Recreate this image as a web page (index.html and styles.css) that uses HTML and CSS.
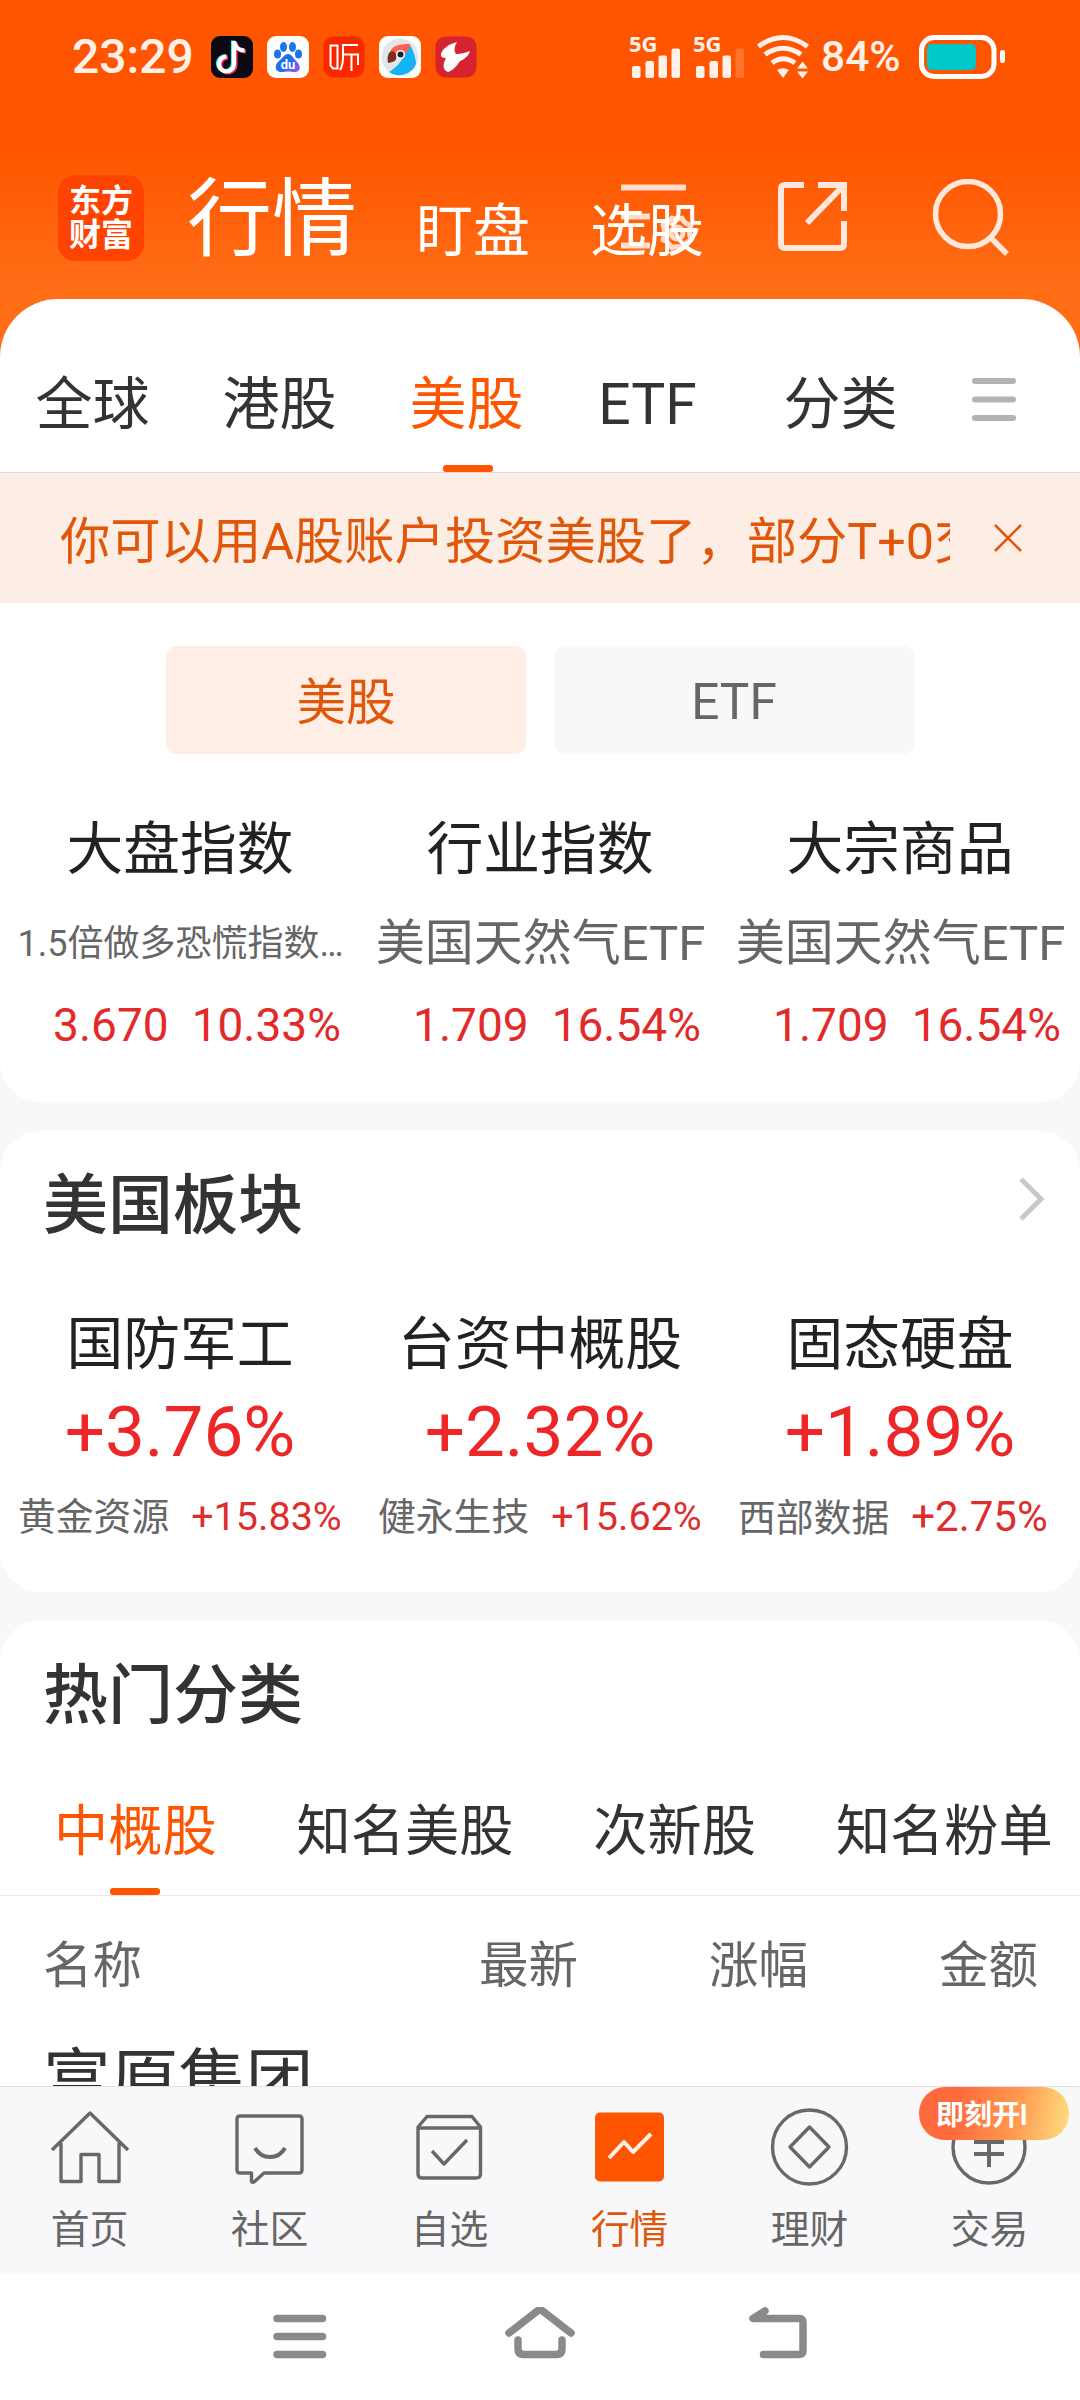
FILE: index.html
```html
<!DOCTYPE html>
<html lang="zh-CN">
<head>
<meta charset="utf-8">
<title>行情</title>
<link rel="stylesheet" href="styles.css">
</head>
<body>
<div class="screen">
  <header class="top">
    <div class="status">
      <span class="clock">23:29</span>
      <div class="apps">
        <svg class="app" viewBox="0 0 42 42"><rect width="42" height="42" rx="9" fill="#0b0a14"/><g fill="none" stroke-width="4.2"><path d="M23 5V28a7.500 7.500 0 1 1-7.500-7.500M23 6c1 5 5 8.500 10.500 8.500" stroke="#25f4ee" transform="translate(-1 -.5)"/><path d="M23 5V28a7.500 7.500 0 1 1-7.500-7.500M23 6c1 5 5 8.500 10.500 8.500" stroke="#fe2c55" transform="translate(1.500 1)"/><path d="M23 5V28a7.500 7.500 0 1 1-7.500-7.500M23 6c1 5 5 8.500 10.500 8.500" stroke="#fff"/></g></svg>
        <svg class="app" viewBox="0 0 42 42"><defs><linearGradient id="paw" x1="0" y1="0" x2="1" y2="1"><stop offset=".5" stop-color="#1f6ff0"/><stop offset="1" stop-color="#b04cf0"/></linearGradient></defs><rect width="42" height="42" rx="9" fill="#fff"/><g fill="#1b74ea"><ellipse cx="16.500" cy="11" rx="3.500" ry="5"/><ellipse cx="25.500" cy="11" rx="3.500" ry="5"/><ellipse cx="10.500" cy="18" rx="3.500" ry="4.500"/><ellipse cx="31.500" cy="18" rx="3.500" ry="4.500"/></g><path d="M21 18c4 0 5 4 8 7 4 3 6 10 0 11-3 .5-5-.5-8-.5s-5 1-8 .5c-6-1-5-8-1-11 4-3 5-7 9-7z" fill="url(#paw)"/><text x="21" y="33" text-anchor="middle" class="du">du</text></svg>
        <svg class="app" viewBox="0 0 42 42"><rect x=".5" y=".5" width="41" height="41" rx="10" fill="#fa2800"/><path d="M7.500 9.500h7v23H10l-2.500-3zM35 9H20v12q0 8-3 13M20 18.500h15V29M28.500 18.500V35" fill="none" stroke="#fff" stroke-width="2"/></svg>
        <svg class="app" viewBox="0 0 42 42"><rect width="42" height="42" rx="9" fill="#fff"/><circle cx="21" cy="21" r="18.500" fill="#e2e5ea"/><path d="M31 9c4 7 6 14 6 19a18 18 0 0 1-27 8c6-4 12-9 16-18z" fill="#14b4f2"/><path d="M11 17C12 10 19 8 31 8c0 5-3 9-8 11l-7 2z" fill="#fb6350"/><path d="M9 27c-1-6 0-11 4-12 4 1 5 5 4 8-1 3-4 3-8 4z" fill="#7e2c20"/><circle cx="21.500" cy="18.500" r="4.500" fill="#fff"/><circle cx="21.500" cy="18.500" r="3" fill="#17202c"/></svg>
        <svg class="app" viewBox="0 0 42 42"><rect x=".5" y=".5" width="41" height="41" rx="10" fill="#d5232f"/><path d="M22 6c-8 2-15 7-16 12-.500 3 2 4 5 4-3 5-4 12 2 14 4-1 9-6 12-11 5-2 9-6 10-10-5 2-9 3-14 3-2-3-2-7 1-12z" fill="#fff"/></svg>
      </div>
      <svg class="signals" viewBox="0 0 184 46" fill="#fff0e8">
        <text x="0" y="18" class="net">5G</text><text x="64" y="18" class="net">5G</text>
        <rect x="3" y="32" width="8.500" height="12" rx="2"/><rect x="16.500" y="27" width="8.500" height="17" rx="2"/><rect x="29.500" y="21.500" width="8.500" height="22.500" rx="2"/><rect x="42.500" y="14.500" width="8.500" height="29.500" rx="2"/>
        <rect x="67" y="32" width="8.500" height="12" rx="2"/><rect x="80.500" y="27" width="8.500" height="17" rx="2"/><rect x="93.500" y="21.500" width="8.500" height="22.500" rx="2"/><rect x="106.500" y="14.500" width="8.500" height="29.500" rx="2" opacity=".2"/>
        <g fill="none" stroke="#fff0e8" stroke-width="5"><path d="M129.500 12.500Q154 -5.500 178.500 12.500"/><path d="M136 20.500Q154 8 172 20.500"/><path d="M143 29Q154 20.500 166 29"/></g>
        <path d="M148 36q6-3.500 12 0l-6 8zM168 34.500l5.500-7 5.500 7zM168 37.500h11l-5.500 7z"/>
      </svg>
      <span class="percent">84%</span>
      <svg class="battery" viewBox="0 0 86 44"><rect x="2.500" y="2.500" width="72.500" height="39" rx="12.500" fill="none" stroke="#fff" stroke-width="5"/><rect x="8" y="9" width="49" height="26" rx="5" fill="#00c8c8"/><rect x="81" y="15" width="5" height="13" rx="2" fill="#fff"/></svg>
    </div>
    <div class="titlebar">
      <div class="logo"><span>东方</span><span>财富</span></div>
      <h1>行情</h1>
      <span class="sub watch">盯盘</span>
      <span class="sub pick">选股<svg class="filter" viewBox="0 0 80 70" fill="none" stroke="#ffdccb" stroke-width="6"><path d="M1 4.500h65M1 33.500h29M1 62.500h29"/><path d="M52 35Q57 37 62 35Q64 41 71 42Q68 49 71 57Q65 59 62 65Q57 62 52 65Q49 59 43 57Q46 49 43 42Q49 41 52 35z" stroke-width="5" stroke-linejoin="round"/><circle cx="57" cy="50" r="6" stroke-width="5"/></svg></span>
      <svg class="share" viewBox="0 0 72 72" fill="none" stroke="#ffe8db" stroke-width="6"><path d="M27 4H8Q4 4 4 8V63Q4 67 8 67H63Q67 67 67 63V40M41 4H67V30M67 4L30 42"/></svg>
      <svg class="search" viewBox="0 0 78 78" fill="none" stroke="#ffe8db" stroke-width="5.500"><circle cx="36" cy="35" r="32.500"/><path d="M58 58L75 75"/></svg>
    </div>
  </header>

  <main>
    <section class="sheet">
      <nav class="tabs"><span>全球</span><span>港股</span><span class="on">美股</span><span class="latin">ETF</span><span>分类</span>
        <svg class="menu" viewBox="0 0 44 44" stroke="#b3b3b3" stroke-width="6" stroke-linecap="round"><path d="M3 4h38M3 22.500h38M3 41h38"/></svg></nav>
      <div class="notice"><p>你可以用A股账户投资美股了，部分T+0交易</p>
        <svg class="close" viewBox="0 0 28 28" stroke="#e2560a" stroke-width="2.500"><path d="M1 1L27 27M27 1L1 27"/></svg></div>
      <div class="pills"><span class="pill on">美股</span><span class="pill">ETF</span></div>
      <div class="grid">
        <div class="index"><h3>大盘指数</h3><p class="small">1.5倍做多恐慌指数…</p><div class="quote"><b>3.670</b><b>10.33%</b></div></div>
        <div class="index"><h3>行业指数</h3><p>美国天然气ETF</p><div class="quote"><b>1.709</b><b>16.54%</b></div></div>
        <div class="index"><h3>大宗商品</h3><p>美国天然气ETF</p><div class="quote"><b>1.709</b><b>16.54%</b></div></div>
      </div>
    </section>

    <section class="card sectors">
      <div class="head"><h2>美国板块</h2><svg class="chevron" viewBox="0 0 28 44" fill="none" stroke="#c9c9c9" stroke-width="5"><path d="M3 2L23 22L3 42"/></svg></div>
      <div class="grid">
        <div class="sector"><h3>国防军工</h3><strong>+3.76%</strong><div class="lead"><span>黄金资源</span><b>+15.83%</b></div></div>
        <div class="sector"><h3>台资中概股</h3><strong>+2.32%</strong><div class="lead"><span>健永生技</span><b>+15.62%</b></div></div>
        <div class="sector"><h3>固态硬盘</h3><strong>+1.89%</strong><div class="lead"><span>西部数据</span><b class="wide">+2.75%</b></div></div>
      </div>
    </section>

    <section class="card hot">
      <div class="head"><h2>热门分类</h2></div>
      <nav class="cats"><span class="on">中概股</span><span>知名美股</span><span>次新股</span><span>知名粉单</span></nav>
      <div class="cols"><span>名称</span><span>最新</span><span>涨幅</span><span>金额</span></div>
      <div class="stock">富原集团</div>
    </section>
  </main>

  <footer class="dock">
    <div class="item"><svg viewBox="0 0 80 80"><path d="M2 43L40 6L78 43M11 36V74.500H31V47.500H49V74.500H69V36"/></svg><span>首页</span></div>
    <div class="item"><svg viewBox="0 0 80 80"><path d="M10 9H69Q72 9 72 12V63Q72 66 69 66H34L24 75Q21 76 21.500 73V66H10Q7 66 7 63V12Q7 9 10 9z"/><path d="M25 41Q30 50 40 50T55 41" stroke-width="4"/></svg><span>社区</span></div>
    <div class="item"><svg viewBox="0 0 80 80"><path d="M8 20V67Q8 71 12 71H66Q70.500 71 70.500 67V20L62 9.500H17zM8 21H70.500M22 44L34 57L57 33"/></svg><span>自选</span></div>
    <div class="item on"><svg viewBox="0 0 80 80"><rect x="5" y="5.500" width="69" height="69" rx="5"/><path d="M19 51L34 35L43 45L61 27"/></svg><span>行情</span></div>
    <div class="item"><svg viewBox="0 0 80 80"><circle cx="39.500" cy="40" r="37"/><path d="M39.500 20L59 40L39.500 60L20 40z"/></svg><span>理财</span></div>
    <div class="item"><svg viewBox="0 0 80 80"><circle cx="39" cy="40" r="36"/><path d="M24 35H54M24 47H54M39 32V60M26 15L39 33L52 15" stroke-width="4"/></svg><span>交易</span><em>即刻开l</em></div>
  </footer>

  <div class="sysnav">
    <svg viewBox="0 0 64 56"><path d="M9 11.500H54.500M9 29.500H54.500M9 47.500H54.500"/></svg>
    <svg viewBox="0 0 72 56"><path d="M5 26L34 3.500Q36 2 38 3.500L67 26M14 33V42Q14 47.500 19.500 47.500H52.500Q58 47.500 58 42V33"/></svg>
    <svg viewBox="0 0 64 56"><path d="M17 4L5 11.500H51Q55 11.500 55 15.500V43.500Q55 47.500 51 47.500H15.500"/></svg>
  </div>
</div>
</body>
</html>
```
FILE: styles.css
```css
* { box-sizing: border-box; margin: 0; padding: 0; }
body { width: 1080px; height: 2400px; overflow: hidden; font-family: Roboto, "Noto Sans CJK SC", sans-serif; color: #333; }
h1, h2, h3, b, strong, em { font-weight: 400; font-style: normal; }
svg { display: block; flex: none; }
.screen { width: 1080px; height: 2400px; display: flex; flex-direction: column; background: #fff; }

.top { flex: none; height: 360px; background: linear-gradient(#ff5500 150px, #ff6e17 290px); }
.status { height: 114px; display: flex; align-items: center; padding-left: 72px; color: #fff0e8; }
.clock { width: 139px; font-size: 48px; font-weight: 500; line-height: 60px; }
.apps { display: flex; gap: 14px; width: 418px; }
.app { width: 42px; height: 42px; }
.du { font: 700 13px Roboto, sans-serif; fill: #fff; }
.signals { width: 184px; height: 46px; overflow: visible; }
.net { font: 700 22px "Noto Sans", sans-serif; }
.percent { width: 98px; padding-left: 8px; font-size: 42.500px; font-weight: 500; line-height: 50px; }
.battery { width: 86px; height: 44px; margin-left: 8px; }
.titlebar { height: 185px; display: flex; align-items: flex-start; padding: 61px 0 0 58px; color: #fff; }
.logo { width: 86px; height: 86px; padding-top: 9px; border-radius: 17px; background: #ff4300; font-size: 32px; font-weight: 700; line-height: 34px; text-align: center; display: flex; flex-direction: column; }
.titlebar h1 { width: 229px; padding: 2px 0 0 43px; font-size: 85px; line-height: 86px; white-space: nowrap; }
.sub { position: relative; z-index: 0; width: 174px; padding-left: 43px; margin-top: 27px; font-size: 57px; line-height: 60px; white-space: nowrap; }
.filter { position: absolute; left: 73px; top: -19px; width: 80px; height: 70px; z-index: -1; }
.share { width: 72px; height: 72px; margin: 6px 0 0 56px; }
.search { width: 78px; height: 78px; margin: 4px 0 0 83px; }

main { flex: none; height: 1787px; margin-top: -61px; overflow: hidden; background: linear-gradient(transparent 61px, #f7f8fa 61px); }
.sheet { height: 803px; background: #fff; border-radius: 58px 58px 40px 40px; }
.tabs { height: 174px; display: flex; padding-top: 71px; border-bottom: 1px solid #ddd; font-size: 57px; line-height: 70px; }
.tabs span { width: 187px; padding-right: 2px; text-align: center; position: relative; }
.tabs .latin { padding-right: 14px; }
.on { color: #ff5500; }
.tabs .on::after, .cats .on::after { content: ""; position: absolute; left: 50%; bottom: 0; width: 50px; height: 7px; margin-left: -25px; border-radius: 3px; background: #ff5500; }
.menu { width: 44px; height: 44px; margin: 7px 0 0 37px; }
.notice { height: 130px; padding: 0 58px 0 60px; display: flex; align-items: center; justify-content: space-between; background: #fceee5; color: #e0570a; }
.notice p { width: 890px; padding-top: 8px; overflow: hidden; font-size: 50.300px; line-height: 70px; white-space: nowrap; }
.close { width: 28px; height: 28px; margin-top: -1px; }
.pills { display: flex; gap: 28px; padding: 43px 166px 0; }
.pill { width: 360px; height: 108px; border-radius: 11px; background: #f8f8fa; color: #666; font-size: 49.5px; line-height: 112px; text-align: center; }
.pill.on { background: #ffeee6; color: #e0570a; line-height: 114px; }
.grid { display: grid; grid-template-columns: repeat(3, 360px); text-align: center; white-space: nowrap; }
.grid h3 { font-size: 56.800px; line-height: 80px; color: #222; }
.sheet .grid { padding-top: 56px; }
.index p { margin-top: 14px; padding-left: 1px; font-size: 49px; line-height: 80px; color: #666; }
.index p.small { font-size: 36px; }
.quote { display: flex; justify-content: center; gap: 23px; padding-left: 34px; margin-top: 4px; font-size: 46px; line-height: 74px; color: #e22a2a; }

.card { margin-top: 29px; background: #fff; border-radius: 40px; }
.head { display: flex; justify-content: space-between; align-items: center; padding: 33px 34px 0 43px; }
.head h2 { font-size: 65px; font-weight: 500; line-height: 84px; }
.chevron { width: 28px; height: 44px; margin-top: -15px; }
.sectors { height: 461px; }
.sectors .grid { padding-top: 57px; }
.sector strong { display: block; font-size: 71px; line-height: 90px; color: #ed2727; margin-top: 2px; }
.lead { display: flex; align-items: baseline; gap: 22px; padding-left: 18px; margin-top: 14px; font-size: 37.800px; line-height: 52px; color: #666; }
.lead b { font-size: 39.500px; color: #dd2d2d; }
.lead b.wide { font-size: 42px; }
.hot { height: 500px; }
.cats { height: 158px; display: flex; gap: 80px; padding: 56px 0 0 54px; border-bottom: 1px solid #e8e8e8; font-size: 54.200px; line-height: 76px; white-space: nowrap; }
.cats span { position: relative; }
.cols { display: flex; justify-content: space-between; padding: 35px 42px 0 43px; color: #666; font-size: 49.500px; line-height: 70px; }
.cols span { width: 230px; text-align: right; }
.cols span:first-child { width: 305px; text-align: left; }
.stock { padding: 35px 0 0 43px; font-size: 67.600px; line-height: 90px; }

.dock { flex: none; height: 188px; display: grid; grid-template-columns: repeat(6, 180px); border-top: 1px solid #e0e0e2; background: #f8f8fa; }
.item { position: relative; display: flex; flex-direction: column; align-items: center; padding-top: 20px; color: #666; font-size: 38.800px; line-height: 50px; }
.item svg { width: 80px; height: 80px; fill: none; stroke: #686868; stroke-width: 3.400px; }
.item path, .item circle { stroke-linejoin: round; }
.item svg path[stroke-width="4"] { stroke-width: 4px; }
.item span { margin-top: 18px; padding-right: 1px; }
.item.on { color: #dc580e; }
.item.on rect { fill: #ff5500; stroke: none; }
.item.on path { stroke: #fff0e8; stroke-width: 4px; }
.item em { position: absolute; left: 19px; top: 0; width: 150px; height: 53px; padding-left: 17px; border-radius: 26px; background: linear-gradient(100deg, #ff6a3c 25%, #ff9a50 65%, #ffe080); color: #fff; font-size: 28px; font-weight: 700; line-height: 57px; white-space: nowrap; }
.sysnav { flex: 1; display: flex; justify-content: center; padding-top: 33px; gap: 172px; }
.sysnav svg { height: 56px; width: 64px; fill: none; stroke: #8a8a8a; stroke-width: 7.500px; stroke-linecap: round; stroke-linejoin: round; }
.sysnav svg:nth-child(2) { width: 72px; }
```
